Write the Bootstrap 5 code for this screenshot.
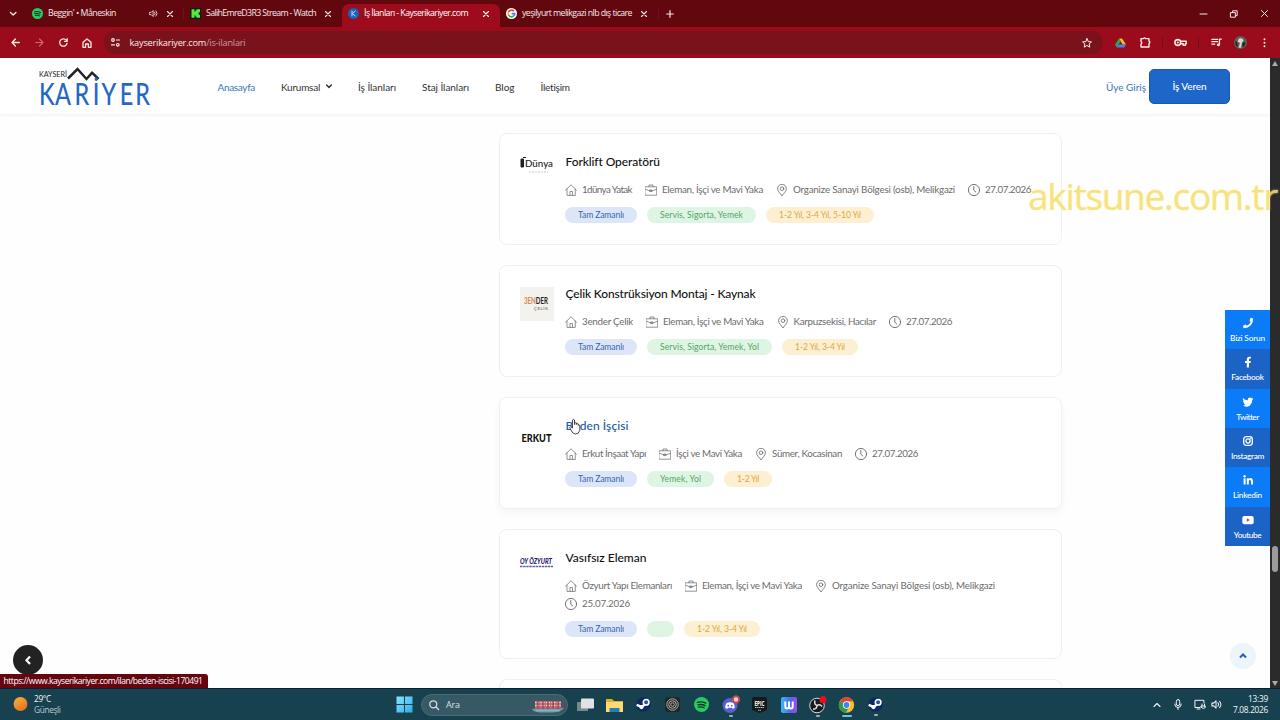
<!DOCTYPE html>
<html lang="tr">
<head>
<meta charset="utf-8">
<title>İş İlanları - Kayserikariyer.com</title>
<link href="https://cdn.jsdelivr.net/npm/bootstrap@5.3.0/dist/css/bootstrap.min.css" rel="stylesheet">
<style>
body{width:1280px;height:720px;overflow:hidden;background:#fefefe;font-family:Lato,"Liberation Sans",sans-serif;font-size:10px;color:#333;line-height:1}
svg{display:block;flex:none;overflow:visible}
.ui,.chrome-tabs,.chrome-tools,.desk{font-family:"Open Sans","Noto Sans",sans-serif}
[data-w]{white-space:nowrap;display:inline-block;flex:none}
.ln{fill:none;stroke:currentColor;stroke-linecap:round;stroke-linejoin:round}
.chrome-tabs{height:27px;background:#63070f;color:#f6e6e6;font-size:8.8px}
.tabsearch{width:25.5px;padding-left:9px}
.btab{width:158px;height:23px;padding:0 9.5px 4px 6px;margin-top:4px;border-radius:7px 7px 0 0;font-weight:500;gap:5.5px}
.btab.on{background:#9d0b1c;color:#fff}
.winbtns{gap:22px;padding-right:11px}
.chrome-tools{height:31px;background:#9a0b1b;color:#ffe9e6;padding-left:3px}
.cell{width:24px;display:flex;justify-content:center;flex:none}
.urlbar{width:999px;height:23px;border-radius:12px;background:#7a121c;margin-left:5px;padding:0 11px 0 7px;font-size:9.2px;font-weight:500}
.urlbar i{font-style:normal;font-weight:400;color:#c99a9e}
.vsep{width:1px;height:11px;background:#70101a;flex:none}
.view{height:630px}
.site{width:1270px;height:630px;overflow:hidden}
.topnav{height:57px;padding-left:39px;padding-right:40px;border-bottom:1px solid #f5f5f5;box-shadow:0 1px 3px #00000008;background:#fff;font-size:10px;color:#333}
.topnav [data-w]{position:relative;top:.5px}
.menu{margin-left:65.5px;gap:26px}
.blue{color:#3d74bd}
.employer{width:81px;height:35px;border-radius:5px;background:#1f66c9;border:1px solid #1759b8;color:#fff;font-size:10px;font-weight:500;padding:0;margin-left:3px}
.jobs{width:563px;margin-left:499px;padding-top:18px;gap:20px}
.job{border:1px solid #f0f0f0;border-radius:8px;height:112px;padding:17.5px 20px 0 20px;background:#fff;flex:none}
.job.tall{height:130px}
.job.hov{box-shadow:0 4px 10px #0000000a}
.jlogo{width:45px;flex:none;padding-top:2px}
.jlogo svg{margin-top:1.5px}
.jtitle{font-size:12px;line-height:20px;font-weight:500;color:#111;height:20px;padding-left:.5px}
.jmeta{margin-top:9.5px;column-gap:13px;font-size:9.8px;color:#6c6c6c}
.jmeta>span{display:flex;align-items:center;height:18px;gap:5px;flex:none}
.jmeta svg{width:12px;height:12px;color:#666}
.tags{margin-top:8px;gap:10px}
.tag{height:16px;min-width:27px;border-radius:8px;padding:0 13px;font-size:8.6px;display:flex;align-items:center}
.t1{background:#dce6f8;color:#3567b5}.t2{background:#def5e3;color:#55a468}.t3{background:#fdf0d2;color:#dda83c}
.scroll{width:10px;background:#2b2b2b;position:relative}
.thumb{position:absolute;left:2px;top:488px;width:6px;height:26px;border-radius:3px;background:#9b9b9b}
.share{position:absolute;left:1225px;top:310px;width:45px}
.share div{height:39.33px;background:#0b7bf8;color:#fff;display:flex;flex-direction:column;align-items:center;font-size:8.3px;font-weight:500;padding-top:7px;gap:5px}
.share div:nth-child(even){background:#1c63c6}
.over{position:absolute}
.stamp{left:1028px;top:171px;font:37px/50px "Open Sans","Noto Sans",sans-serif;color:#f4df70;text-shadow:0 0 2px #fff2a0;opacity:.88}
.status{left:0;top:674px;width:207.5px;height:14px;background:#65050f;color:#fff;font-size:8.6px;border-radius:0 3px 0 0;padding-left:3.5px}
.desk{height:32px;background:#18414f;border-top:1px solid #081f36;color:#f1f6f8;font-size:8.3px}
.weather{width:396px;padding-left:13px}
.find{width:147px;height:22px;border-radius:11px;background:#365965;border:1px solid #4b6b75;padding:0 2px 0 7px;margin-left:8px;font-size:9px;color:#d5e0e3}
.app{display:flex;justify-content:center;width:29.1px;flex:none;position:relative}
.app.run::after{content:"";position:absolute;bottom:-4px;width:4px;height:2px;border-radius:1px;background:#9fb0b5}
.app.now::after{width:10px;background:#65c6e8}
.apps{margin-left:2.5px}
</style>
</head>
<body class="d-flex flex-column">
<svg width="0" height="0" class="over">
<symbol id="x" viewBox="0 0 8 8"><path class="ln" d="M1.5 1.5l5 5M6.5 1.5l-5 5" stroke-width="1.1"/></symbol>
<symbol id="house" viewBox="0 0 12 12"><path class="ln" stroke-width=".7" d="M.5 6.2L6 .8l5.5 5.4M2 5v6.4h8.3V5M5 11.3V7.5h2.5v3.8"/></symbol>
<symbol id="case" viewBox="0 0 12 12"><path class="ln" stroke-width=".7" d="M.3 2.8h11.4v8.4H.3zM4 2.6V1h4v1.6M.5 5.3l4.300 1.500h2.400l4.300-1.500M5 6h2v1.600H5z"/></symbol>
<symbol id="pin" viewBox="0 0 12 12"><path class="ln" stroke-width=".8" d="M6 11.700C4 9.300 1.600 7.200 1.600 4.700a4.400 4.400 0 0 1 8.800 0C10.400 7.200 8 9.300 6 11.700z"/><circle class="ln" stroke-width=".8" cx="6" cy="4.700" r="1.800"/></symbol>
<symbol id="clock" viewBox="0 0 12 12"><circle class="ln" stroke-width=".9" cx="6" cy="6" r="5.600"/><path class="ln" stroke-width=".9" d="M5.800 2.500v3.800L7.800 8"/></symbol>
<symbol id="spot" viewBox="0 0 12 12"><circle cx="6" cy="6" r="6" fill="#25cc63"/><path class="ln" style="stroke:#12301d" stroke-width="1.100" d="M2.700 4.300q3.500-1 6.700.6M3.200 6.300q3-.8 5.600.6M3.600 8.100q2.400-.6 4.500.5"/></symbol>
<symbol id="steam" viewBox="0 0 16 16"><circle cx="8" cy="8" r="7.800" fill="#0e2a5c"/><path d="M.7 8.500L6 10.600l5-3.800" stroke="#fff" stroke-width="2.600" fill="none"/><circle cx="10.800" cy="5.600" r="3" fill="#28558c" stroke="#fff" stroke-width="1.700"/><circle cx="5.800" cy="10.700" r="2.300" fill="#fff"/></symbol>
<symbol id="vol" viewBox="0 0 12 12"><path class="ln" stroke-width="1.100" d="M1 4.500h2L5.500 2v8L3 7.500H1zM7.500 4.200q1.500 1.800 0 3.600M9.300 2.500q3 3.500 0 7"/></symbol>
</svg>

<header class="chrome-tabs d-flex align-items-center">
  <div class="tabsearch"><svg width="8" height="6"><path class="ln" stroke-width="1.4" d="M1.5 1.5L4.2 4l2.7-2.5"/></svg></div>
  <div class="btab d-flex align-items-center"><svg width="11" height="11"><use href="#spot"/></svg><span data-w="68">Beggin' • Måneskin</span><svg class="ms-auto" width="9" height="9" style="margin-right:3px"><use href="#vol"/></svg><svg width="8" height="8"><use href="#x"/></svg></div>
  <span class="vsep" style="margin-left:-1px"></span>
  <div class="btab d-flex align-items-center"><svg width="11" height="11"><rect width="11" height="11" fill="#101a08"/><path fill="#55e83b" d="M1.5 1.2h3v2.2h1V2.3h1V1.2H10v3H8.7v2.6H10v3H6.5V8.7h-1V7.6h-1v2.2h-3z"/></svg><span data-w="110">SalihEmreD3R3 Stream - Watch</span><svg class="ms-auto" width="8" height="8"><use href="#x"/></svg></div>
  <div class="btab on d-flex align-items-center"><svg width="11" height="11"><circle cx="5.5" cy="5.5" r="5.5" fill="#1763bb"/><path class="ln" style="stroke:#c2dcf8" d="M4 3v5M7.4 3L4.3 5.5 7.4 8"/></svg><span data-w="104">İş İlanları - Kayserikariyer.com</span><svg class="ms-auto" width="8" height="8"><use href="#x"/></svg></div>
  <div class="btab d-flex align-items-center"><svg width="11" height="11"><circle cx="5.5" cy="5.5" r="5.5" fill="#fff"/><g fill="none" stroke-width="1.6"><path stroke="#e34234" d="M2.5 4A3.4 3.4 0 0 1 8 3.2"/><path stroke="#f2b51b" d="M2.5 4a3.5 3.5 0 0 0 0 3"/><path stroke="#34a853" d="M2.5 7A3.4 3.4 0 0 0 7.5 8.2"/><path stroke="#4285f4" d="M7.5 8.2Q8.800 7.200 8.800 5.600H5.600"/></g></svg><span data-w="110">yeşilyurt melikgazi nlb dış ticare</span><svg class="ms-auto" width="8" height="8"><use href="#x"/></svg></div>
  <span class="vsep"></span>
  <svg style="margin-left:7.5px" width="8" height="8"><path class="ln" stroke-width="1.2" d="M4 .7v6.6M.7 4h6.6"/></svg>
  <div class="winbtns d-flex align-items-center ms-auto"><svg width="8" height="8"><path class="ln" d="M0 4h7"/></svg><svg width="8" height="8"><path class="ln" d="M.8 2.6h4.6v4.6H.8zM2.6 2.4V.8h4.6v4.8H5.8"/></svg><svg width="9" height="9"><path class="ln" d="M1.500 1.500l6 6M7.500 1.500l-6 6"/></svg></div>
</header>

<nav class="chrome-tools d-flex align-items-center">
  <span class="cell"><svg width="9" height="9"><path class="ln" stroke-width="1.3" d="M8.3 4.5H1M4.4 1L1 4.5 4.4 8"/></svg></span>
  <span class="cell" style="color:#d0656a"><svg width="9" height="9"><path class="ln" stroke-width="1.2" d="M.7 4.5H8M4.6 1L8 4.5 4.6 8"/></svg></span>
  <span class="cell"><svg width="9" height="9"><path class="ln" stroke-width="1.3" d="M8 5.3A3.7 3.7 0 1 1 7.3 2.2M8.2.6v2.7H5.5"/></svg></span>
  <span class="cell"><svg width="10" height="10"><path class="ln" stroke-width="1.3" d="M1 4.3L5 .9l4 3.4v5H6.4V6H3.6v3.3H1z"/></svg></span>
  <div class="urlbar d-flex align-items-center">
    <svg width="9" height="9"><path class="ln" stroke-width="1.2" d="M5.5 2H8.500M.5 6.800h3"/><circle class="ln" stroke-width="1.2" cx="2" cy="2" r="1.3"/><circle class="ln" stroke-width="1.2" cx="6.800" cy="6.800" r="1.3"/></svg>
    <span data-w="116" style="margin-left:9.5px">kayserikariyer.com<i>/is-ilanlari</i></span>
    <svg class="ms-auto" width="10" height="10"><path class="ln" d="M5 .6l1.300 3 3.200.3-2.400 2.100.7 3.200L5 7.500 2.200 9.200l.7-3.200L.5 3.900l3.200-.3z"/></svg>
  </div>
  <span class="cell" style="margin-left:5px"><svg width="11" height="10"><path fill="#f4bd2b" d="M4 .5h3l4 6H7.600z"/><path fill="#2da35c" d="M4 .5L0 6.800l1.700 2.700 4-6.300z"/><path fill="#4384ee" d="M3.600 6.500H11L9.300 9.500H1.700z"/></svg></span>
  <span class="cell" style="margin-left:1px"><svg width="11" height="11"><path class="ln" stroke-width="1.4" d="M1 1.600h2.500q1-1.400 2.200 0H9v2.500q1.700 1.200 0 2.400V10H1V7q1.600-1.200 0-2.500z"/></svg></span>
  <span class="vsep" style="margin-left:5px"></span>
  <span class="cell" style="margin-left:5px"><svg width="13" height="9"><circle class="ln" stroke-width="1.600" cx="3.800" cy="4.500" r="2.900"/><circle cx="3.800" cy="4.500" r="1" fill="currentColor"/><path class="ln" stroke-width="1.500" d="M6.800 3.300h5.400v2.500h-.8v1.400H9.200V5.700H6.800"/></svg></span>
  <span class="vsep" style="margin-left:6px"></span>
  <span class="cell" style="margin-left:5px"><svg width="11" height="9"><path class="ln" stroke-width="1.2" d="M.8 1.300h6M.8 3.700h6M.8 6.100h3M8.500 6.700V1.200h1.800"/><circle cx="7.400" cy="6.800" r="1.500" fill="currentColor"/></svg></span>
  <span class="cell"><svg width="13" height="13"><circle cx="6.500" cy="6.500" r="6.500" fill="#5c6257"/><path fill="#dcd6cb" d="M5 2.500q4-1 4.500 2L8 6.500 7 11.800H4.500L6 7 3.500 5.500z"/><path fill="#20231f" d="M1 5l2 1 1 5-2-1.500zM8.500 7l3-1-1 4-2 1z"/></svg></span>
  <span class="cell"><svg width="3" height="10" fill="currentColor"><circle cx="1.500" cy="1.300" r="1"/><circle cx="1.500" cy="4.800" r="1"/><circle cx="1.500" cy="8.300" r="1"/></svg></span>
</nav>

<main class="view d-flex">
 <div class="site">
  <nav class="topnav d-flex align-items-center">
    <svg width="113" height="40" viewBox="0 0 113 40"><text x="0" y="10.5" font-size="8" textLength="28" lengthAdjust="spacingAndGlyphs" fill="#222">KAYSERİ</text><path d="M29 12.500L38.500 3l9 10 5.600-6.300L59.500 13" fill="none" stroke="#222" stroke-width="2.500"/><text transform="translate(0 38.500) scale(.78 1)" x="0 20.500 45.500 69 80 103.500 123.500" y="0" font-size="30" font-weight="500" fill="#2568c3">KARİYER</text></svg>
    <div class="menu d-flex align-items-center">
      <span class="blue" data-w="37.5">Anasayfa</span><span class="d-flex align-items-center"><span data-w="39">Kurumsal</span><svg style="margin-left:6px" width="6" height="5"><path class="ln" stroke-width="1.4" d="M.6 1L3 3.500 5.400 1"/></svg></span><span data-w="38">İş İlanları</span><span data-w="47">Staj İlanları</span><span data-w="19.5">Blog</span><span data-w="29.5">İletişim</span>
    </div>
    <span class="blue ms-auto" data-w="40">Üye Giriş</span>
    <button class="btn employer"><span data-w="34">İş Veren</span></button>
  </nav>
  <div class="jobs d-flex flex-column">
    <article class="job d-flex"><div class="jlogo"><svg width="33" height="34"><path d="M1 4h2.500v8H1zM3 2.500h3" stroke="#222" fill="#222"/><text x="5" y="12" font-size="8.500" font-weight="500" textLength="28" lengthAdjust="spacingAndGlyphs" fill="#222">Dünya</text><path d="M9 17h19" stroke="#bbb" stroke-width=".8" stroke-dasharray="2 1"/></svg></div>
      <div><div class="jtitle"><span data-w="94">Forklift Operatörü</span></div>
      <div class="jmeta d-flex flex-wrap"><span><svg><use href="#house"/></svg><b class="fw-normal" data-w="50">1dünya Yatak</b></span><span><svg><use href="#case"/></svg><b class="fw-normal" data-w="101">Eleman, İşçi ve Mavi Yaka</b></span><span><svg><use href="#pin"/></svg><b class="fw-normal" data-w="162">Organize Sanayi Bölgesi (osb), Melikgazi</b></span><span><svg><use href="#clock"/></svg><b class="fw-normal" data-w="46">27.07.2026</b></span></div>
      <div class="tags d-flex"><span class="tag t1"><span data-w="46">Tam Zamanlı</span></span><span class="tag t2"><span data-w="83">Servis, Sigorta, Yemek</span></span><span class="tag t3"><span data-w="82">1-2 Yıl, 3-4 Yıl, 5-10 Yıl</span></span></div></div></article>
    <article class="job d-flex"><div class="jlogo"><svg width="34" height="34"><rect width="34" height="34" fill="#f4f2ed"/><text x="4" y="16.500" font-size="9" font-weight="700" textLength="24" lengthAdjust="spacingAndGlyphs" fill="#d08a50">3EN<tspan fill="#222">DER</tspan></text><text x="14" y="23" font-size="4" font-weight="700" textLength="14" fill="#777">ÇELİK</text></svg></div>
      <div><div class="jtitle"><span data-w="190">Çelik Konstrüksiyon Montaj - Kaynak</span></div>
      <div class="jmeta d-flex flex-wrap"><span><svg><use href="#house"/></svg><b class="fw-normal" data-w="51">3ender Çelik</b></span><span><svg><use href="#case"/></svg><b class="fw-normal" data-w="100.5">Eleman, İşçi ve Mavi Yaka</b></span><span><svg><use href="#pin"/></svg><b class="fw-normal" data-w="82.5">Karpuzsekisi, Hacılar</b></span><span><svg><use href="#clock"/></svg><b class="fw-normal" data-w="46">27.07.2026</b></span></div>
      <div class="tags d-flex"><span class="tag t1"><span data-w="46">Tam Zamanlı</span></span><span class="tag t2"><span data-w="99">Servis, Sigorta, Yemek, Yol</span></span><span class="tag t3"><span data-w="50">1-2 Yıl, 3-4 Yıl</span></span></div></div></article>
    <article class="job hov d-flex"><div class="jlogo"><svg width="33" height="34"><text x="1.500" y="22.500" font-size="10.500" font-weight="900" textLength="30" lengthAdjust="spacingAndGlyphs" fill="#111">ERKUT</text></svg></div>
      <div><div class="jtitle" style="color:#1e5aa8"><span data-w="63">Beden İşçisi</span></div>
      <div class="jmeta d-flex flex-wrap"><span><svg><use href="#house"/></svg><b class="fw-normal" data-w="64">Erkut İnşaat Yapı</b></span><span><svg><use href="#case"/></svg><b class="fw-normal" data-w="66">İşçi ve Mavi Yaka</b></span><span><svg><use href="#pin"/></svg><b class="fw-normal" data-w="70">Sümer, Kocasinan</b></span><span><svg><use href="#clock"/></svg><b class="fw-normal" data-w="46">27.07.2026</b></span></div>
      <div class="tags d-flex"><span class="tag t1"><span data-w="46">Tam Zamanlı</span></span><span class="tag t2"><span data-w="41">Yemek, Yol</span></span><span class="tag t3"><span data-w="22">1-2 Yıl</span></span></div></div></article>
    <article class="job tall d-flex"><div class="jlogo"><svg width="33" height="34"><text x="0" y="13" font-size="8" font-weight="900" font-style="italic" textLength="32" lengthAdjust="spacingAndGlyphs" fill="#201a70">OY ÖZYURT</text><path d="M0 15.500h33" stroke="#6660a5" stroke-width="1.600" stroke-dasharray="2.500 .6"/></svg></div>
      <div><div class="jtitle"><span data-w="81">Vasıfsız Eleman</span></div>
      <div class="jmeta d-flex flex-wrap"><span><svg><use href="#house"/></svg><b class="fw-normal" data-w="90">Özyurt Yapı Elemanları</b></span><span><svg><use href="#case"/></svg><b class="fw-normal" data-w="100">Eleman, İşçi ve Mavi Yaka</b></span><span><svg><use href="#pin"/></svg><b class="fw-normal" data-w="163">Organize Sanayi Bölgesi (osb), Melikgazi</b></span><span><svg><use href="#clock"/></svg><b class="fw-normal" data-w="48">25.07.2026</b></span></div>
      <div class="tags d-flex"><span class="tag t1"><span data-w="46">Tam Zamanlı</span></span><span class="tag t2"></span><span class="tag t3"><span data-w="50">1-2 Yıl, 3-4 Yıl</span></span></div></div></article>
    <article class="job"></article>
  </div>
 </div>
 <div class="scroll"><div class="thumb"></div><svg class="over" style="left:2px;top:3px" width="6" height="5"><path fill="#aaa" d="M0 5l3-5 3 5z"/></svg><svg class="over" style="left:2px;top:623px" width="6" height="5"><path fill="#aaa" d="M0 0l3 5 3-5z"/></svg></div>
</main>

<aside class="share">
  <div><svg width="12" height="12"><path fill="#fff" d="M8.600.8l2.600.6q0 9-9.600 9.800L1 8.700l2.700-1.200 1.200 1.300Q7.700 7.500 8.700 5L7.400 3.800z"/></svg><span data-w="35">Bizi Sorun</span></div>
  <div><svg width="12" height="12"><path fill="#fff" d="M4.800 11.500V6.900H3V5h1.800V3.500Q4.900.7 7.400.7h1.500v1.800H7.900Q7 2.600 7 3.500V5h1.900l-.4 1.900H7v4.600z"/></svg><span data-w="32.5">Facebook</span></div>
  <div><svg width="12" height="12"><path fill="#fff" d="M.9 2Q3 4.200 5.800 4.300 5.500 1.600 8 1.400q1 0 1.700.8l1.400-.5-.8 1.300 1-.2-1 1.200Q10.200 8 7.700 9.700 4.200 11.700.8 9.500 2.500 9.700 3.600 8.800 2 8.400 1.800 7.200h.9Q1 6.500 1 4.800l1 .3Q.3 3.800.9 2z"/></svg><span data-w="22">Twitter</span></div>
  <div><svg width="12" height="12"><rect class="ln" stroke-width="1.300" x="1.700" y="1.700" width="8.600" height="8.600" rx="2.500"/><circle class="ln" stroke-width="1.300" cx="6" cy="6" r="2.100"/><circle cx="8.500" cy="3.500" r=".7" fill="#fff"/></svg><span data-w="33">Instagram</span></div>
  <div><svg width="12" height="12" fill="#fff"><circle cx="2.600" cy="2.300" r="1.200"/><path d="M1.600 4.200h2v6.400h-2zM4.800 4.200h2v.9q2-2 3.700 0 .5.900.5 2v3.500H9V7.200q-.1-1.300-1.100-1.300t-1.100 1.300v3.400h-2z"/></svg><span data-w="29">Linkedin</span></div>
  <div><svg width="12" height="12"><rect x=".3" y="2" width="11.400" height="8.200" rx="2" fill="#fff"/><path fill="#bf3d43" d="M4.800 4.300v3.500L7.800 6z"/></svg><span data-w="27.5">Youtube</span></div>
</aside>
<svg class="over" style="left:1230px;top:643px" width="26" height="26"><circle cx="13" cy="13" r="13" fill="#edf4fa"/><path d="M10 14.500l3-3 3 3" fill="none" stroke="#2460b4" stroke-width="2"/></svg>
<svg class="over" style="left:13px;top:644.5px" width="30" height="30"><circle cx="15" cy="15" r="15" fill="#222"/><path d="M17 11.500L13.500 15.200l3.500 3.700" fill="none" stroke="#fff" stroke-width="2.200"/></svg>
<div class="over ui status d-flex align-items-center"><span data-w="199">https://www.kayserikariyer.com/ilan/beden-iscisi-170491</span></div>
<svg class="over" style="left:569px;top:418px" width="12" height="17"><path fill="#fff" stroke="#333" stroke-width=".9" d="M3.500 10V2q1-1.500 2 0v4.500-1.800q1.100-.8 1.800.2v1.600-1q1.100-.7 1.800.3v1.400q1.500-1 1.700.6v4.500Q10 16 6.500 16 4 16 2.500 13L.6 9.500q.6-1.600 2.900.5z"/></svg>
<div class="over stamp"><span data-w="249">akitsune.com.tr</span></div>

<footer class="desk d-flex align-items-center">
  <div class="weather d-flex align-items-center"><svg width="15" height="15"><defs><linearGradient id="sun" x2=".6" y2="1"><stop stop-color="#f7b540"/><stop offset="1" stop-color="#e7721d"/></linearGradient></defs><circle cx="7.500" cy="7" r="6.900" fill="url(#sun)"/></svg><div class="ms-1" style="padding-left:2px"><div><span data-w="17">29°C</span></div><div style="margin-top:2px;color:#b8cbd1"><span data-w="26.5">Güneşli</span></div></div></div>
  <svg width="17" height="17"><defs><linearGradient id="win" x2="1" y2="1"><stop stop-color="#8be4fb"/><stop offset="1" stop-color="#2bade8"/></linearGradient></defs><path fill="url(#win)" d="M.5.5h7.500V8H.5zM9 .5h7.500V8H9zM.5 9h7.500v7.500H.5zM9 9h7.500v7.500H9z"/></svg>
  <div class="find d-flex align-items-center"><svg width="10" height="10"><circle class="ln" stroke-width="1.300" cx="4.300" cy="4.300" r="3.500"/><path class="ln" stroke-width="1.400" d="M7 7l2.600 2.600"/></svg><span data-w="14" style="margin-left:7px">Ara</span>
    <svg class="ms-auto" width="34" height="18"><path fill="#7997a2" d="M1 13q16-3 32-1-3 4-11 4.500H9Q2 16 1 13z"/><path fill="#c65f65" d="M4 5h26v8H4z"/><path stroke="#edd3cc" stroke-width="1.300" stroke-dasharray="1.500 1.200" d="M4 6.500h26M4 9.500h26"/><path stroke="#6e4961" stroke-width="1" d="M7 4v9M12 3v10M17 5v8M22 2.500v10M27 3v10M32 4v8"/><path stroke="#65c0d7" stroke-width="1.500" d="M5 14.500h24"/></svg></div>
  <div class="apps d-flex align-items-center">
    <span class="app"><svg width="17" height="16"><rect x="0" y="5" width="11" height="9" fill="#78888c"/><rect x="4" y="1.500" width="13" height="10" rx="1" fill="#dfe3e3"/></svg></span>
    <span class="app"><svg width="17" height="16"><path fill="#e9a92c" d="M0 2h6l2 2h9v11H0z"/><path fill="#fddb70" d="M0 5h17v10H0z"/><path fill="#267cc0" d="M3.500 11h10v4h-10z"/></svg></span>
    <span class="app"><svg width="15" height="15"><use href="#steam"/></svg></span>
    <span class="app"><svg width="15" height="15"><rect width="15" height="15" rx="3" fill="#222725"/><g fill="none" stroke="#c0bdb1" stroke-width=".9"><circle cx="7.500" cy="7.500" r="5.700"/><circle cx="7.500" cy="7.500" r="3.800"/><circle cx="7.500" cy="7.500" r="1.800"/></g></svg></span>
    <span class="app"><svg width="15" height="15"><use href="#spot"/></svg></span>
    <span class="app run"><svg width="17" height="16"><circle cx="8" cy="8.500" r="7.500" fill="#5460d2"/><path fill="#fff" d="M4.500 6q3.500-1.500 7 0 1.500 2.500 1.200 5l-2 .9-.7-1.200H6l-.7 1.200-2-.9Q3 8.500 4.500 6z"/><circle cx="6.300" cy="8.700" r=".9" fill="#5460d2"/><circle cx="9.700" cy="8.700" r=".9" fill="#5460d2"/><circle cx="14" cy="2.500" r="3.200" fill="#f2dadb" stroke="#c9444d" stroke-width="2"/></svg></span>
    <span class="app"><svg width="15" height="16"><path fill="#15191a" d="M0 2Q0 0 2 0h11q2 0 2 2v11l-7.500 3L0 13z"/><text x="2.500" y="8.500" font-size="7" font-weight="700" textLength="10" lengthAdjust="spacingAndGlyphs" fill="#fff">EPIC</text><path stroke="#ccc" stroke-width=".9" stroke-dasharray="1.500 .5" d="M3 10.500h9M6 13.300h3"/></svg></span>
    <span class="app"><svg width="16" height="16"><defs><linearGradient id="wm" x2="1"><stop stop-color="#32bdf0"/><stop offset=".6" stop-color="#5a62ee"/><stop offset="1" stop-color="#a04bea"/></linearGradient></defs><rect width="16" height="16" rx="2" fill="url(#wm)"/><path d="M4.300 4.500v5q0 2 1.800 2t1.900-2v-5 5q0 2 1.900 2t1.800-2v-5" fill="none" stroke="#fff" stroke-width="2"/></svg></span>
    <span class="app run"><svg width="17" height="16"><circle cx="8" cy="8.500" r="7.300" fill="#171b1c" stroke="#d7dcdd"/><g fill="none" stroke="#e1e4e4" stroke-width="1.500"><path d="M8 8.500q-3.200-1-2-5M8 8.500q2.800-2 5 1M8 8.500q0 3.500-4 3.700"/></g><circle cx="14" cy="2.700" r="3.600" fill="#e2101b"/></svg></span>
    <span class="app run now"><svg width="17" height="16"><circle cx="8.500" cy="8" r="7.700" fill="#f4c226"/><path fill="#db4638" d="M8.500 8L1.700 4.300Q4 .3 8.500.3q4.500 0 6.900 4H8.500z"/><path fill="#30994b" d="M8.500 8L1.700 4.300Q-.8 10 3 13.400q2 1.900 5 2.300L11 10z"/><circle cx="8.500" cy="8" r="3.700" fill="#fff"/><circle cx="8.500" cy="8" r="2.900" fill="#4383e8"/></svg></span>
    <span class="app run"><svg width="15" height="15"><use href="#steam"/></svg></span>
  </div>
  <div class="ms-auto d-flex align-items-center" style="padding-right:12px">
    <svg width="8" height="6"><path class="ln" stroke-width="1.100" d="M1 4.500l3-3 3 3"/></svg>
    <svg style="margin-left:13px" width="8" height="11"><rect class="ln" x="2.300" y=".6" width="3.400" height="6" rx="1.700"/><path class="ln" d="M.7 5q0 3.500 3.300 3.500T7.300 5M4 8.500v2"/></svg>
    <svg style="margin-left:12px" width="12" height="11"><path class="ln" d="M6 8.500H.9V1.300h9v2.500M3 10h3M8 5v2M10.500 5v2M7.300 7h4v1.500q-2 2-4 0z"/></svg>
    <svg style="margin-left:5px" width="11" height="11"><use href="#vol"/></svg>
    <div class="text-end" style="margin-left:11px;width:35px"><div><span data-w="20">13:39</span></div><div style="margin-top:2px"><span data-w="35">7.08.2026</span></div></div>
  </div>
</footer>
<script src="https://cdn.jsdelivr.net/npm/bootstrap@5.3.0/dist/js/bootstrap.bundle.min.js"></script>
<script>
// Track each label out to its column measure (data-w, px).
document.querySelectorAll('[data-w]').forEach(function(el){
  var w=+el.dataset.w, n=el.textContent.length;
  el.style.letterSpacing=((w-el.getBoundingClientRect().width)/n).toFixed(3)+'px';
});
</script>
</body>
</html>
